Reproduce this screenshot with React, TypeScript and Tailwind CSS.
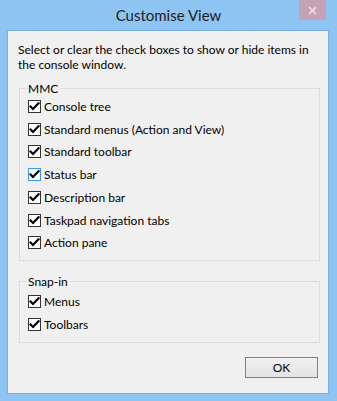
import React from "react";

const font = { fontFamily: 'Lato, "Noto Sans", sans-serif' };

function Check({ focus = false }: { focus?: boolean }) {
  return (
    <span
      className={
        "flex h-[13px] w-[13px] shrink-0 items-center justify-center border bg-white " +
        (focus ? "border-[#3399ff]" : "border-[#333333]")
      }
    >
      <svg width="11" height="11" viewBox="0 0 11 11">
        <path d="M1.5 5.5 L4 8 L9.5 2.2" fill="none" stroke="#000" strokeWidth="2.2" strokeLinecap="square" />
      </svg>
    </span>
  );
}

function Row({ label, focus = false }: { label: string; focus?: boolean }) {
  return (
    <div className="flex h-[22.75px] items-center gap-[3px]">
      <Check focus={focus} />
      <span className="text-[12px] leading-[15px] text-black">{label}</span>
    </div>
  );
}

export default function App() {
  return (
    <div className="flex h-[401px] w-[337px] flex-col bg-[#8ec4f2]" style={font}>
      <div className="relative flex h-[30px] items-center justify-center">
        <span className="text-[15px] leading-[20px] text-[#1e1e1e]">Customise View</span>
        <div className="absolute right-[11px] top-0 flex h-[20px] w-[27px] items-center justify-center bg-[#c6a2b6]">
          <svg width="9" height="9" viewBox="0 0 9 9">
            <path d="M1 1 L8 8 M8 1 L1 8" stroke="#ece3e8" strokeWidth="1.6" />
          </svg>
        </div>
      </div>
      <div className="ml-[7px] mr-[8px] mb-[7px] flex flex-1 flex-col border border-[#78aee3] bg-[#f0f0f0]">
        <p className="ml-[10px] mr-[12px] mt-[11px] text-[12px] leading-[15px] text-black">
          Select or clear the check boxes to show or hide items in the console window.
        </p>
        <fieldset className="ml-[11px] mr-[8px] mt-[9px] border border-[#dcdcdc] px-[8px] pb-[5.75px]">
          <legend className="-ml-[2px] px-[2px] text-[12px] leading-[15px] text-black">MMC</legend>
          <div className="-mt-[1px] flex flex-col">
            <Row label="Console tree" />
            <Row label="Standard menus (Action and View)" />
            <Row label="Standard toolbar" />
            <Row label="Status bar" focus />
            <Row label="Description bar" />
            <Row label="Taskpad navigation tabs" />
            <Row label="Action pane" />
          </div>
        </fieldset>
        <fieldset className="ml-[11px] mr-[8px] mt-[13px] border border-[#dcdcdc] px-[8px] pb-[6px]">
          <legend className="-ml-[2px] px-[2px] text-[12px] leading-[15px] text-black">Snap-in</legend>
          <div className="mt-[1.5px] flex flex-col">
            <Row label="Menus" />
            <Row label="Toolbars" />
          </div>
        </fieldset>
        <div className="mr-[10px] mt-[14px] flex justify-end">
          <button className="flex h-[21px] w-[73px] items-center justify-center border border-[#3c8fe6] bg-gradient-to-b from-[#f2f2f2] to-[#e3e3e3] text-[12px] leading-[15px] text-black">
            OK
          </button>
        </div>
      </div>
    </div>
  );
}
